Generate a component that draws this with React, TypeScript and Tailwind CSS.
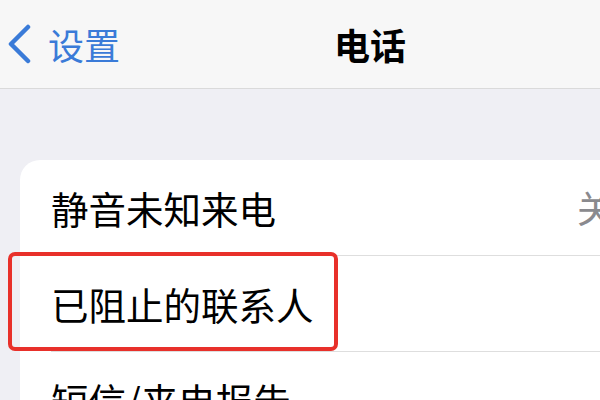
import { useState } from 'react';

const rows = [
  { label: '静音未知来电', value: '关' },
  { label: '已阻止的联系人', value: '' },
  { label: '短信/来电报告', value: '' },
];

export default function App() {
  const [highlighted] = useState(1);

  return (
    <div
      className="w-[600px] h-[400px] overflow-hidden bg-[#efeff4] relative"
      style={{ fontFamily: '"Noto Sans CJK SC", "Noto Sans", sans-serif' }}
    >
      {/* Nav bar */}
      <div className="h-[89px] bg-[#f7f7f7] border-b border-[#dadada] flex items-center">
        <button className="flex items-center pl-[6px] text-[#3a7bd8]">
          <svg width="26" height="40" viewBox="0 0 26 40" fill="none" className="mt-[-1px]">
            <path d="M22 3 L5 20 L22 37" stroke="currentColor" strokeWidth="4.5" strokeLinecap="round" strokeLinejoin="round" />
          </svg>
          <span className="ml-[16px] text-[36px] leading-none">设置</span>
        </button>
        <h1 className="ml-[214px] text-[36px] leading-none font-bold text-black">电话</h1>
      </div>

      {/* Settings group */}
      <div className="pt-[71px] pl-[20px]">
        <div className="bg-white rounded-tl-[20px]">
          {rows.map((row, i) => (
            <div key={row.label} className="pl-[31px]">
              <div
                className={
                  'h-[96px] flex items-center justify-between ' +
                  (i < rows.length - 1 ? 'border-b border-[#dedede]' : '')
                }
              >
                <span className="text-[37.5px] leading-none text-black">{row.label}</span>
                {row.value && (
                  <span className="text-[37px] leading-none text-[#8a8a8e] mr-[-14px]">{row.value}</span>
                )}
              </div>
            </div>
          ))}
        </div>
      </div>

      {/* Red highlight annotation */}
      {highlighted === 1 && (
        <div className="absolute left-[8px] top-[252px] w-[330px] h-[99px] border-[4px] border-[#e8302a] rounded-[7px]" />
      )}
    </div>
  );
}
